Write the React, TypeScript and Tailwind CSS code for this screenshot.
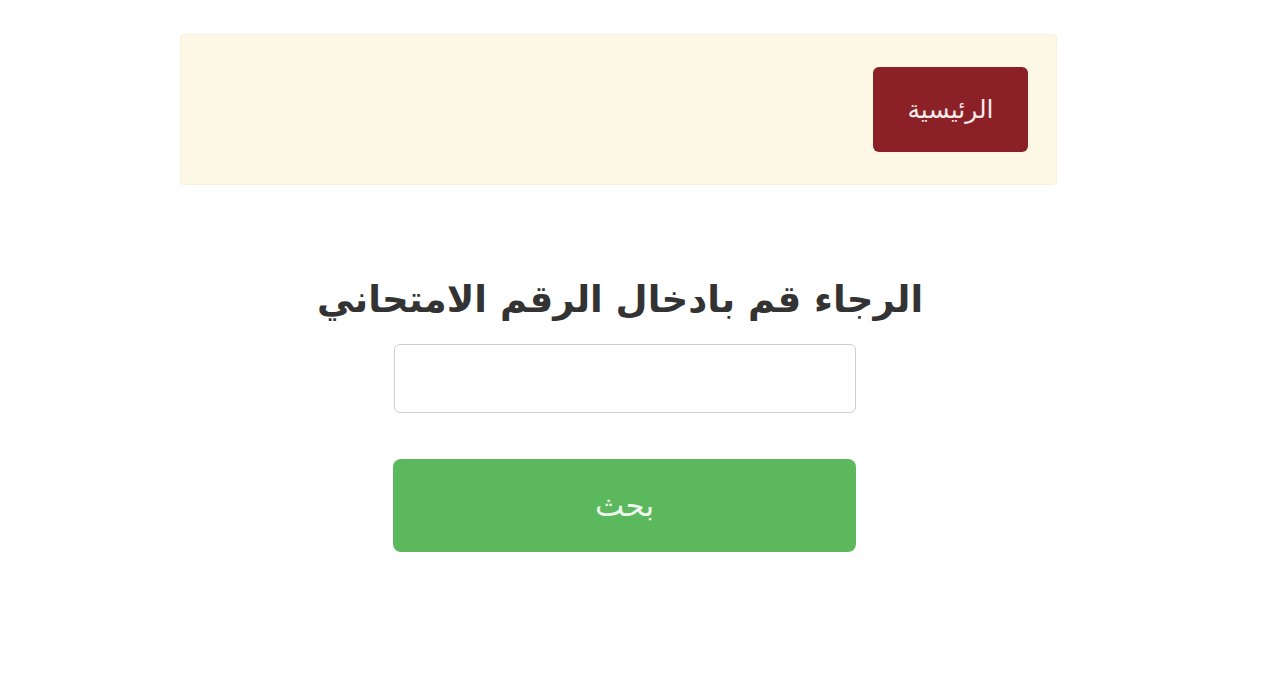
export default function App() {
  return (
    <div
      className="min-h-[700px] w-[1280px] bg-white"
      style={{ fontFamily: '"DejaVu Sans", "Noto Sans", sans-serif' }}
    >
      <div className="ml-[180px] w-[877px] pt-[34px]">
        {/* Banner */}
        <div
          dir="rtl"
          className="flex h-[151px] items-center rounded-[4px] border border-[#f8f0da] bg-[#fdf7e5] pr-[28px]"
        >
          <button className="h-[85px] w-[155px] rounded-[6px] bg-[#8b2127] text-[25px] text-[#f7ecec]">
            الرئيسية
          </button>
        </div>

        {/* Form */}
        <div dir="rtl" className="mt-[93px] flex flex-col items-center">
          <h1 className="ml-[3px] text-[37px] font-bold leading-[44px] text-[#333]">
            الرجاء قم بادخال الرقم الامتحاني
          </h1>
        </div>
        <div className="mt-[22px] flex flex-col pl-[214px]">
          <input
            type="text"
            className="h-[69px] w-[462px] rounded-[6px] border border-[#cfcfcf] bg-white px-3 outline-none"
          />
          <button
            dir="rtl"
            className="mt-[46px] h-[93px] w-[463px] -ml-px rounded-[8px] bg-[#5cb85c] text-[31px] text-[#eef8ee]"
          >
            بحث
          </button>
        </div>
      </div>
    </div>
  );
}
